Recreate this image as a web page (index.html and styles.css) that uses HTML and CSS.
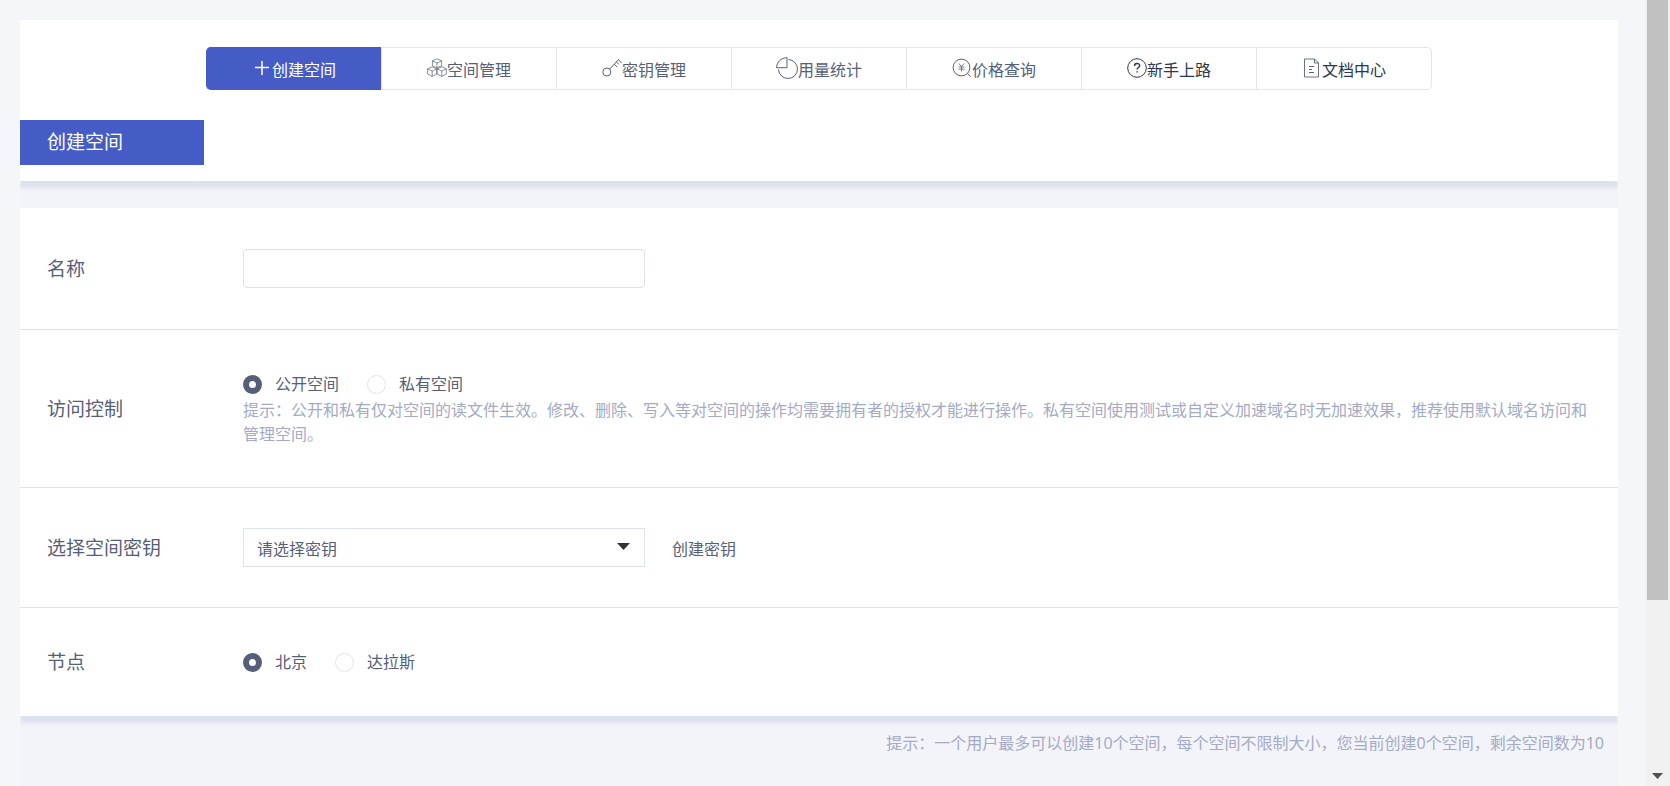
FILE: index.html
```html
<!DOCTYPE html>
<html lang="zh-CN">
<head>
<meta charset="utf-8">
<title>创建空间</title>
<link rel="stylesheet" href="styles.css">
</head>
<body>
<div class="page">
  <main class="content">
    <div class="panel">
      <header class="card card-head">
        <nav class="tabs">
          <a class="tab tab-active" href="#create"><svg class="icon" viewBox="0 0 20 20"><path d="M10 3v14M3 9.500h14" stroke-width="1.500"/></svg>创建空间</a>
          <a class="tab" href="#spaces"><svg class="icon" viewBox="0 0 20 20"><path d="M10 .8l4.600 2v5L10 10 5.400 7.800v-5zM5.400 2.800L10 5l4.600-2.200M10 5v5M5.200 8.800l4.600 2v5.200l-4.600 2.400L.6 16v-5.200zM.6 10.800l4.600 2.200 4.600-2.200M5.200 13v5.400M14.800 8.800l4.600 2V16l-4.600 2.400L10 16v-5.200zM10 10.800l4.800 2.200 4.600-2.200M14.800 13v5.400" stroke-width=".7"/></svg>空间管理</a>
          <a class="tab" href="#keys"><svg class="icon" viewBox="0 0 20 20"><circle cx="4.800" cy="14" r="4"/><path d="M7.600 11.200L16.500 1.500l3 3.600M12.200 6.200l3 3M14.400 3.800l2.400 2.600"/></svg>密钥管理</a>
          <a class="tab" href="#usage"><svg class="icon icon-wide" viewBox="0 0 22 22"><path d="M11 .7v10H.6C.6 5.200 5 .7 11 .7zM12.500 2.500A9.500 9.500 0 1 1 2.500 12.500"/></svg>用量统计</a>
          <a class="tab" href="#price"><svg class="icon" viewBox="0 0 20 20"><circle cx="9.500" cy="9.500" r="8.400"/><path d="M15.600 15.600l3 3"/><path d="M7 5.500l2.500 3.200L12 5.500M9.500 8.700v4.800M6.500 9h6M6.500 11.200h6" stroke-width=".8"/></svg>价格查询</a>
          <a class="tab tab-dark" href="#guide"><svg class="icon" viewBox="0 0 20 20"><circle cx="10" cy="10" r="9.300"/><path d="M7.500 8c0-3.300 5.200-3.200 5.200-.4 0 1.800-2.600 1.900-2.600 4M10.100 13.200v1.400" stroke-width="1.400"/></svg>新手上路</a>
          <a class="tab tab-dark" href="#docs"><svg class="icon" viewBox="0 0 20 20"><path d="M2.500 1h10l4 4v14h-14zM12.500 1v4h4" stroke-width=".7"/><path d="M7 8.500h5M7 11.500h3M7 14.500h5" stroke-width=".8"/></svg>文档中心</a>
        </nav>
        <h1 class="title">创建空间</h1>
      </header>

      <form class="card card-form">
        <div class="row row-name">
          <label class="row-label" for="name">名称</label>
          <input class="text-input" id="name" type="text">
        </div>
        <div class="row row-access" role="radiogroup" aria-labelledby="access-label">
          <span class="row-label" id="access-label">访问控制</span>
          <div class="row-body">
            <div class="options">
              <label class="option"><input class="radio" type="radio" name="access" checked>公开空间</label>
              <label class="option"><input class="radio" type="radio" name="access">私有空间</label>
            </div>
            <p class="hint">提示：公开和私有仅对空间的读文件生效。修改、删除、写入等对空间的操作均需要拥有者的授权才能进行操作。私有空间使用测试或自定义加速域名时无加速效果，推荐使用默认域名访问和管理空间。</p>
          </div>
        </div>
        <div class="row row-key">
          <label class="row-label" for="key">选择空间密钥</label>
          <div class="select-wrap">
            <select class="select" id="key"><option>请选择密钥</option></select>
            <svg class="caret" viewBox="0 0 13 7"><path d="M0 0h13L6.500 7z"/></svg>
          </div>
          <a class="link" href="#new-key">创建密钥</a>
        </div>
        <div class="row row-node" role="radiogroup" aria-labelledby="node-label">
          <span class="row-label" id="node-label">节点</span>
          <div class="options">
            <label class="option"><input class="radio" type="radio" name="node" checked>北京</label>
            <label class="option"><input class="radio" type="radio" name="node">达拉斯</label>
          </div>
        </div>
      </form>
      <p class="hint footnote">提示：一个用户最多可以创建10个空间，每个空间不限制大小，您当前创建0个空间，剩余空间数为10</p>
    </div>
  </main>
  <div class="scrollbar" aria-hidden="true">
    <div class="thumb"></div>
    <svg class="scroll-arrow" viewBox="0 0 11 6"><path d="M0 0h11L5.500 6z"/></svg>
  </div>
</div>
</body>
</html>
```
FILE: styles.css
```css
* {
  box-sizing: border-box;
}

body {
  margin: 0;
  background: #f5f6fa;
  color: #565e78;
  font: 16px/24px "Noto Sans", "Noto Sans CJK SC", sans-serif;
}

.page {
  display: flex;
  min-height: 100vh;
}

.content {
  flex: 1;
  display: flex;
  min-width: 0;
  padding: 20px 27px 0 20px;
}

.panel {
  flex: 1;
  min-width: 0;
  overflow: hidden;
  background: #f3f4f9;
}

.card {
  background: #fff;
  box-shadow: 0 7px 4px #dce1ee;
}

.card-head {
  padding: 27px 0 16px;
  margin-bottom: 27px;
}

.tabs {
  display: flex;
  max-width: 1226px;
  margin: 0 auto 30px;
  border: 1px solid #e4e5e8;
  border-left: 0;
  border-radius: 5px;
}

.tab {
  flex: 1;
  display: flex;
  align-items: center;
  justify-content: center;
  height: 41px;
  padding-top: 2px;
  border-left: 1px solid #e4e5e8;
  color: inherit;
  text-decoration: none;
}

.tab-active {
  margin: -1px 0;
  height: 43px;
  border-color: #455cc6;
  border-radius: 5px 0 0 5px;
  background: #455cc6;
  color: #fff;
}

.tab-dark {
  color: #2c3750;
}

.icon {
  width: 20px;
  height: 20px;
  margin-bottom: 4px;
  fill: none;
  stroke: currentColor;
}

.icon-wide {
  width: 22px;
  height: 22px;
}

.title {
  width: 184px;
  margin: 0;
  padding: 10px 27px 11px;
  background: #455cc6;
  color: #fff;
  font-size: 19px;
  line-height: 24px;
  font-weight: 400;
}

.row {
  display: flex;
  align-items: center;
  padding: 0 14px 0 27px;
}

.row + .row {
  border-top: 1px solid #dce1ee;
}

.row-label {
  flex: none;
  width: 196px;
  font-size: 19px;
}

.row-name {
  height: 121px;
}

.row-access {
  padding-top: 42px;
  padding-bottom: 41px;
}

.row-key {
  height: 120px;
}

.row-node {
  height: 109px;
}

.row-body {
  flex: 1;
}

.text-input,
.select {
  width: 402px;
  height: 39px;
  border: 1px solid #dce1ee;
  background: #fff;
  color: inherit;
  font: inherit;
}

.text-input {
  padding: 0 13px;
  border-radius: 4px;
}

.select-wrap {
  position: relative;
}

.select {
  display: block;
  padding: 3px 13px 0;
  border-radius: 0;
  appearance: none;
}

.caret {
  position: absolute;
  top: 15px;
  right: 15px;
  width: 13px;
  height: 7px;
  fill: #333;
}

.link {
  margin-left: 27px;
  padding-top: 3px;
  color: inherit;
  text-decoration: none;
}

.options {
  display: flex;
  gap: 28px;
}

.option {
  display: flex;
  align-items: center;
  gap: 13px;
}

.radio {
  appearance: none;
  width: 19px;
  height: 19px;
  margin: 0;
  border: 1px solid #e2e4ec;
  border-radius: 50%;
  background: #fff;
}

.radio:checked {
  border: 6px solid #565e78;
}

.hint {
  margin: 2px 0 0;
  padding-right: 8px;
  color: #a3aac6;
}

.footnote {
  margin: 0;
  padding: 15px 14px 16px;
  text-align: right;
}

.scrollbar {
  position: sticky;
  top: 0;
  display: flex;
  flex-direction: column;
  justify-content: space-between;
  align-items: center;
  width: 25px;
  height: 100vh;
  padding: 0 2px 7px;
  background: #f1f1f1;
}

.thumb {
  width: 100%;
  height: 77%;
  background: #c1c1c1;
}

.scroll-arrow {
  width: 11px;
  height: 6px;
  fill: #505050;
}
```
